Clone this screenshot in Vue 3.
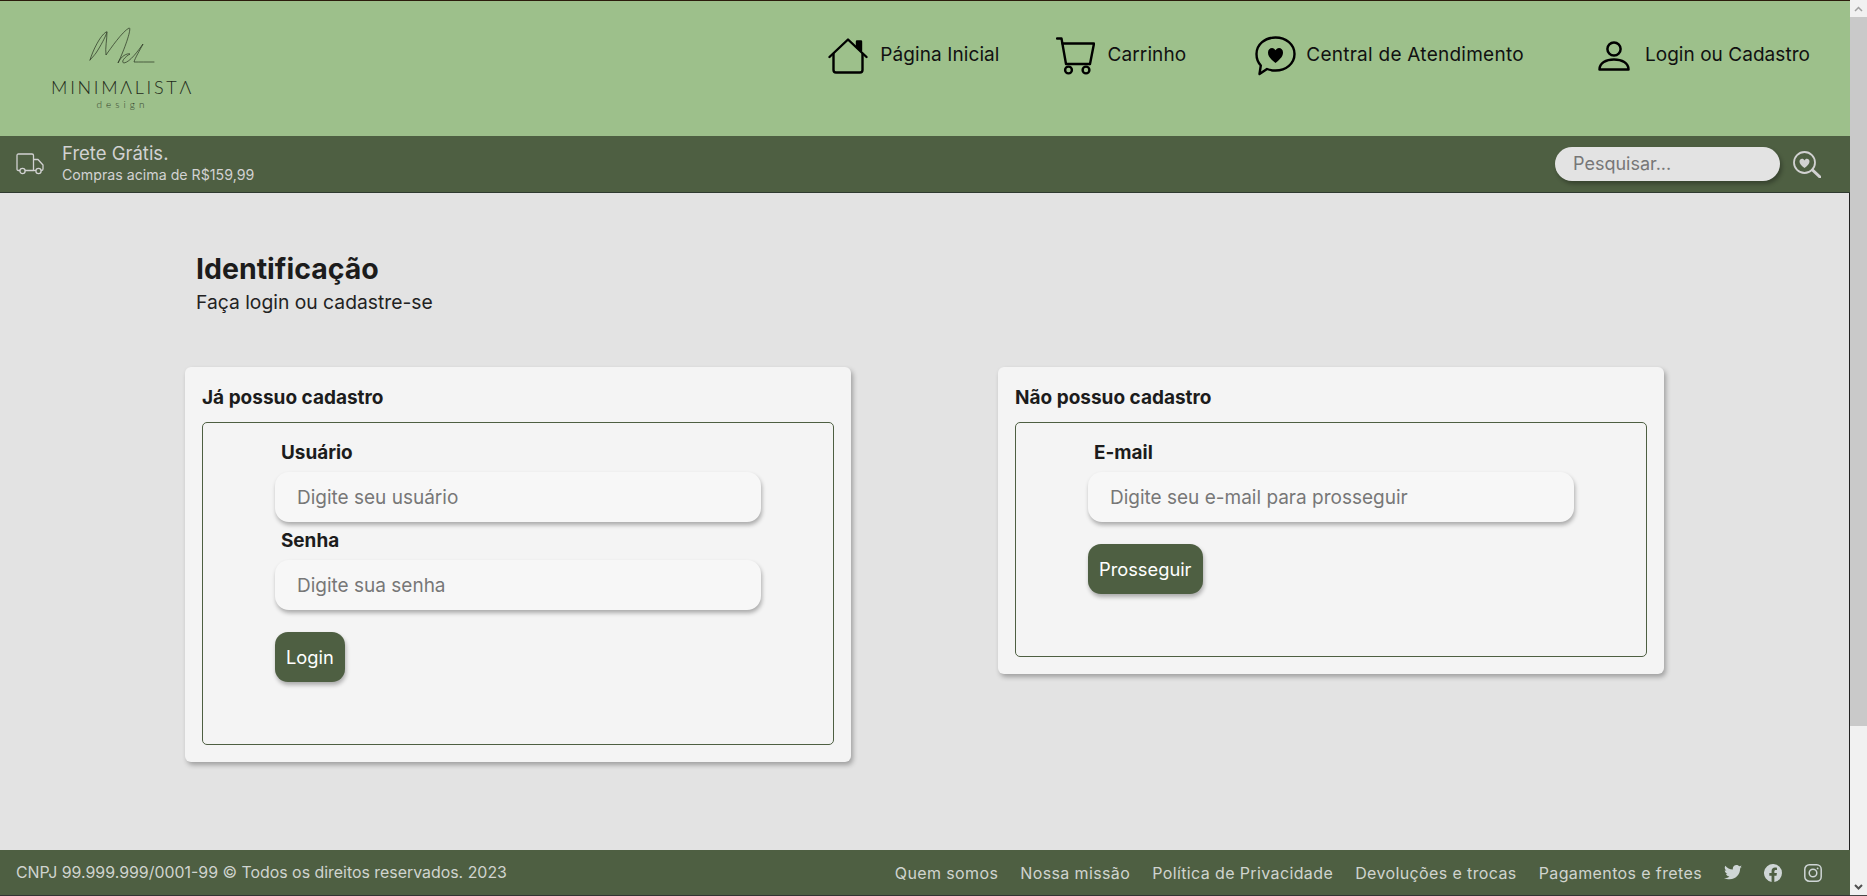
<template>
  <div class="page">
    <div class="content">
      <header class="top">
        <div class="logo">
          <svg class="sign" viewBox="0 0 90 50" fill="none" stroke="#26301f" stroke-width="0.7" stroke-linecap="round" stroke-linejoin="round">
            <path d="M10 40 C13 30 20 16 26 12 C29 10 22 24 16 33 C13 37 10 40 10 40 M27 12 C27 20 25 28 26 35 C31 28 42 12 49 8 C52 7 46 26 38 43 C41 36 47 33 50 34 C46 36 40 42 44 43 C50 42 58 31 63 24 C60 30 55 38 54 42 C60 42 67 42 74 42" />
          </svg>
          <div class="brand">MINIMΛLISTΛ</div>
          <div class="brand-sub">design</div>
        </div>
        <nav class="nav">
          <a class="nav-item nav-home">
            <svg width="40" height="36" viewBox="0 0 40 36" fill="none" stroke="#000" stroke-width="2.4" stroke-linecap="round" stroke-linejoin="round">
              <path d="M1.5 19 L20 1.5 L38.5 19" />
              <path d="M5.5 16 V32 Q5.5 34.5 8 34.5 H32 Q34.5 34.5 34.5 32 V16" />
              <path d="M29 3.5 H33 V12.5 L29 9 Z" fill="#000" />
            </svg>
            <span>Página Inicial</span>
          </a>
          <a class="nav-item nav-cart">
            <svg width="39" height="38" viewBox="0 0 39 38" fill="none" stroke="#000" stroke-width="2.4" stroke-linecap="round" stroke-linejoin="round">
              <path d="M1 1.5 H5.5 L10 27 H33.5" />
              <path d="M6.5 6.5 H38 L34 27" />
              <circle cx="12.5" cy="33" r="3.4" />
              <circle cx="30" cy="33" r="3.4" />
            </svg>
            <span>Carrinho</span>
          </a>
          <a class="nav-item nav-chat">
            <svg width="41" height="40" viewBox="0 0 41 40" fill="none">
              <path d="M20.5 1.5 C31 1.5 39.5 8.500 39.5 18 C39.5 27.5 31 34.5 20.5 34.5 C17.5 34.5 14.5 34 12 33 L4.5 38 L5.8 29.5 C3 26.5 1.5 22.5 1.5 18 C1.5 8.500 10 1.500 20.5 1.500 Z" stroke="#000" stroke-width="2.4" stroke-linejoin="round" />
              <path d="M20.5 27 C15 22.5 13 20 13 16.5 C13 13.5 15 12 17 12 C18.6 12 19.8 13 20.5 14.3 C21.2 13 22.4 12 24 12 C26 12 28 13.5 28 16.5 C28 20 26 22.5 20.5 27 Z" fill="#000" />
            </svg>
            <span>Central de Atendimento</span>
          </a>
          <a class="nav-item nav-login">
            <svg width="32" height="30" viewBox="0 0 32 30" fill="none" stroke="#000" stroke-width="2.5" stroke-linejoin="round">
              <circle cx="16" cy="8" r="6.6" />
              <path d="M1.5 28.5 C1.5 22 8 18.5 16 18.5 C24 18.5 30.5 22 30.5 28.5 Z" />
            </svg>
            <span>Login ou Cadastro</span>
          </a>
        </nav>
      </header>

      <div class="promo">
        <div class="promo-left">
          <svg width="28" height="22" viewBox="0 0 28 22" fill="none" stroke="#d2d2d2" stroke-width="1.3" stroke-linejoin="round">
            <path d="M4 17.5 H2.5 Q1 17.5 1 16 V2.5 Q1 1 2.5 1 H16 Q17.5 1 17.5 2.5 V17.5 H9" />
            <path d="M17.5 6.5 H22 L27 12 V16 Q27 17.5 25.5 17.5 H25" />
            <path d="M17.5 17.5 H20" />
            <circle cx="6.5" cy="18" r="2.6" />
            <circle cx="22.5" cy="18" r="2.6" />
          </svg>
          <div class="promo-text">
            <div class="promo-title">Frete Grátis.</div>
            <div class="promo-sub">Compras acima de R$159,99</div>
          </div>
        </div>
        <div class="search">
          <input class="search-input" type="text" placeholder="Pesquisar..." />
          <svg width="28" height="27" viewBox="0 0 28 27" fill="none" stroke="#d2d2d2" stroke-width="1.8" stroke-linecap="round">
            <circle cx="11.5" cy="11.5" r="10.5" />
            <path d="M19.5 19 L27 26" stroke-width="3" />
            <path d="M11.5 17 C8 14.5 6.500 12.800 6.500 10.600 C6.500 8.800 7.800 7.800 9 7.800 C10.100 7.800 11 8.500 11.500 9.400 C12 8.500 12.900 7.800 14 7.800 C15.200 7.800 16.500 8.800 16.500 10.600 C16.500 12.800 15 14.500 11.500 17 Z" fill="#d2d2d2" stroke="none" />
          </svg>
        </div>
      </div>

      <main class="main">
        <div class="heading">
          <h1>Identificação</h1>
          <p>Faça login ou cadastre-se</p>
        </div>
        <div class="cards">
          <section v-for="card in cards" :key="card.title" class="card">
            <h2>{{ card.title }}</h2>
            <div class="box" :class="card.boxClass">
              <form class="form" @submit.prevent>
                <template v-for="field in card.fields" :key="field.label">
                  <label>{{ field.label }}</label>
                  <input type="text" :placeholder="field.placeholder" />
                </template>
                <button type="submit">{{ card.action }}</button>
              </form>
            </div>
          </section>
        </div>
      </main>

      <footer class="footer">
        <span class="copy">CNPJ 99.999.999/0001-99 © Todos os direitos reservados. 2023</span>
        <div class="footer-right">
          <a v-for="link in links" :key="link">{{ link }}</a>
          <div class="social">
            <svg width="18" height="15" viewBox="0 0 24 20" fill="#cfd6d6">
              <path d="M24 2.400c-.9.4-1.800.7-2.800.8 1-.6 1.800-1.600 2.200-2.700-1 .6-2 1-3.100 1.200C19.300.7 18 0 16.600 0c-2.700 0-4.900 2.200-4.900 4.900 0 .4 0 .8.100 1.100C7.700 5.800 4.100 3.900 1.700.9c-.4.7-.7 1.600-.7 2.500 0 1.700.9 3.200 2.200 4.100-.8 0-1.600-.2-2.200-.6v.1c0 2.400 1.700 4.400 3.900 4.800-.4.100-.8.200-1.300.2-.3 0-.6 0-.9-.1.600 2 2.400 3.400 4.600 3.400-1.700 1.300-3.800 2.100-6.100 2.100-.4 0-.8 0-1.200-.1C2.200 18.300 4.800 19.100 7.500 19.100c9.100 0 14-7.500 14-14v-.6c1-.7 1.800-1.500 2.500-2.100z" />
            </svg>
            <svg width="18" height="18" viewBox="0 0 24 24" fill="#cfd6d6">
              <path d="M24 12a12 12 0 1 0-13.900 11.900v-8.400H7.100V12h3V9.400c0-3 1.800-4.700 4.500-4.700 1.300 0 2.700.2 2.700.2v3h-1.500c-1.500 0-2 .9-2 1.900V12h3.400l-.5 3.500h-2.900v8.400A12 12 0 0 0 24 12z" />
            </svg>
            <svg width="18" height="18" viewBox="0 0 18 18" fill="none" stroke="#cfd6d6" stroke-width="1.5">
              <rect x="0.8" y="0.8" width="16.400" height="16.400" rx="4.500" />
              <circle cx="9" cy="9" r="3.800" />
              <circle cx="13.600" cy="4.400" r="0.900" fill="#cfd6d6" stroke="none" />
            </svg>
          </div>
        </div>
      </footer>
    </div>

    <aside class="scrollbar">
      <div class="arrow">
        <svg width="9" height="6" viewBox="0 0 9 6" fill="none" stroke="#a0a0a0" stroke-width="1.500"><path d="M1 5 L4.500 1.500 L8 5" /></svg>
      </div>
      <div class="thumb"></div>
      <div class="track"></div>
      <div class="arrow">
        <svg width="9" height="6" viewBox="0 0 9 6" fill="none" stroke="#505050" stroke-width="2"><path d="M1 1 L4.500 4.500 L8 1" /></svg>
      </div>
    </aside>
  </div>
</template>

<script setup>
const cards = [
  {
    title: 'Já possuo cadastro',
    boxClass: 'box-login',
    action: 'Login',
    fields: [
      { label: 'Usuário', placeholder: 'Digite seu usuário' },
      { label: 'Senha', placeholder: 'Digite sua senha' },
    ],
  },
  {
    title: 'Não possuo cadastro',
    boxClass: 'box-signup',
    action: 'Prosseguir',
    fields: [
      { label: 'E-mail', placeholder: 'Digite seu e-mail para prosseguir' },
    ],
  },
]

const links = [
  'Quem somos',
  'Nossa missão',
  'Política de Privacidade',
  'Devoluções e trocas',
  'Pagamentos e fretes',
]
</script>

<style>
body {
  overflow: hidden;
}
</style>

<style scoped>
.page {
  display: flex;
  height: 896px;
  font-family: Inter, "Noto Sans", sans-serif;
  color: #1c1c1c;
  background: #e3e3e3;
}

.content {
  flex: 1;
  min-width: 0;
  display: flex;
  flex-direction: column;
}

.top {
  height: 136px;
  box-sizing: border-box;
  border-top: 1px solid #2b1c0c;
  background: #9dc08b;
  display: flex;
  justify-content: space-between;
  flex-shrink: 0;
}

.logo {
  margin-left: 52px;
  width: 141px;
  display: flex;
  flex-direction: column;
  align-items: center;
  padding-top: 19px;
}

.sign {
  width: 90px;
  height: 50px;
  align-self: flex-start;
  margin-left: 28px;
}

.brand {
  margin-top: 8px;
  font-family: Lato, sans-serif;
  font-weight: 300;
  font-size: 18px;
  line-height: 18px;
  letter-spacing: 2.7px;
  color: #1f2a1a;
  white-space: nowrap;
}

.brand-sub {
  margin-top: 2px;
  font-family: Lato, sans-serif;
  font-weight: 300;
  font-size: 10px;
  line-height: 12px;
  letter-spacing: 4px;
  color: #33402c;
}

.nav {
  display: flex;
  align-items: center;
  align-self: flex-start;
  padding-top: 33px;
  padding-right: 40px;
}

.nav-item {
  display: flex;
  align-items: center;
  height: 40px;
  font-size: 19px;
  letter-spacing: 0.1px;
  color: #111;
  white-space: nowrap;
}

.nav-item svg {
  margin-top: 3px;
  flex-shrink: 0;
}

.nav-home svg { margin-right: 12px; }
.nav-cart { margin-left: 56px; }
.nav-cart svg { margin-right: 13px; }
.nav-chat { margin-left: 69px; letter-spacing: 0.26px; }
.nav-chat svg { margin-right: 10px; }
.nav-login { margin-left: 74px; letter-spacing: 0.05px; }
.nav-login svg { margin-right: 15px; }

.promo {
  height: 57px;
  box-sizing: border-box;
  border-bottom: 1px solid #2f3a30;
  background: #4e5f42;
  display: flex;
  justify-content: space-between;
  align-items: center;
  padding: 0 29px 0 16px;
  flex-shrink: 0;
}

.promo-left {
  display: flex;
  align-items: center;
  gap: 18px;
}

.promo-text {
  color: #d2d2d2;
}

.promo-title {
  font-size: 18.5px;
  line-height: 22px;
}

.promo-sub {
  font-size: 14.2px;
  line-height: 22px;
}

.search {
  display: flex;
  align-items: center;
  gap: 13px;
}

.search-input {
  width: 225px;
  height: 34px;
  box-sizing: border-box;
  border: 0;
  border-radius: 17px;
  padding: 0 18px 2px;
  background: #e3e3e3;
  box-shadow: 2px 3px 4px rgba(0, 0, 0, 0.3);
  font: inherit;
  font-size: 18px;
}

.search-input::placeholder {
  color: #777;
}

.main {
  flex: 1;
  min-height: 0;
  border-right: 1px solid #222;
}

.heading {
  padding: 58px 0 0 196px;
}

.heading h1 {
  margin: 0 0 2px;
  font-size: 28.5px;
  line-height: 36px;
  font-weight: 700;
  color: #1c1c1c;
}

.heading p {
  margin: 0;
  font-size: 19.3px;
  line-height: 26px;
  color: #222;
}

.cards {
  display: flex;
  align-items: flex-start;
  gap: 147px;
  margin: 52px 0 0 185px;
}

.card {
  width: 666px;
  box-sizing: border-box;
  padding: 16px 17px 17px;
  background: #f4f4f4;
  border-radius: 6px;
  box-shadow: 2px 3px 5px rgba(0, 0, 0, 0.3);
}

.card h2 {
  margin: 0 0 9px;
  font-size: 19px;
  line-height: 30px;
  font-weight: 700;
}

.box {
  box-sizing: border-box;
  border: 1px solid #4e5f42;
  border-radius: 5px;
  padding: 17px 72px 0;
}

.box-login { height: 323px; }
.box-signup { height: 235px; }

.form {
  display: flex;
  flex-direction: column;
  align-items: flex-start;
}

.form label {
  margin-left: 6px;
  font-size: 18.9px;
  line-height: 26px;
  font-weight: 700;
  height: 32px;
}

.form input {
  width: 486px;
  height: 50px;
  box-sizing: border-box;
  border: 0;
  border-radius: 14px;
  padding: 0 22px;
  margin-bottom: 6px;
  background: #f7f7f7;
  box-shadow: 1px 3px 4px rgba(0, 0, 0, 0.3);
  font: inherit;
  font-size: 19px;
}

.form input::placeholder {
  color: #777;
}

.form button {
  height: 50px;
  margin-top: 16px;
  padding: 0 11px;
  border: 0;
  border-radius: 13px;
  background: #4e5f42;
  color: #fff;
  box-shadow: 1px 3px 4px rgba(0, 0, 0, 0.3);
  font: inherit;
  font-size: 18.3px;
}

.footer {
  height: 46px;
  box-sizing: border-box;
  border-bottom: 1px solid #333;
  background: #4e5f42;
  color: #d0d4cf;
  font-size: 16px;
  display: flex;
  justify-content: space-between;
  align-items: center;
  padding: 0 28px 0 16px;
  flex-shrink: 0;
  white-space: nowrap;
}

.copy {
  font-size: 15.9px;
}

.footer-right {
  display: flex;
  align-items: center;
  gap: 22px;
  letter-spacing: 0.38px;
}

.social {
  display: flex;
  align-items: center;
  gap: 22px;
}

.scrollbar {
  width: 17px;
  box-sizing: border-box;
  border-bottom: 1px solid #444;
  flex-shrink: 0;
  display: flex;
  flex-direction: column;
  background: #f1f1f1;
}

.arrow {
  height: 17px;
  display: flex;
  align-items: center;
  justify-content: center;
}

.thumb {
  height: 709px;
  background: #c9c9c9;
}

.track {
  flex: 1;
}
</style>
